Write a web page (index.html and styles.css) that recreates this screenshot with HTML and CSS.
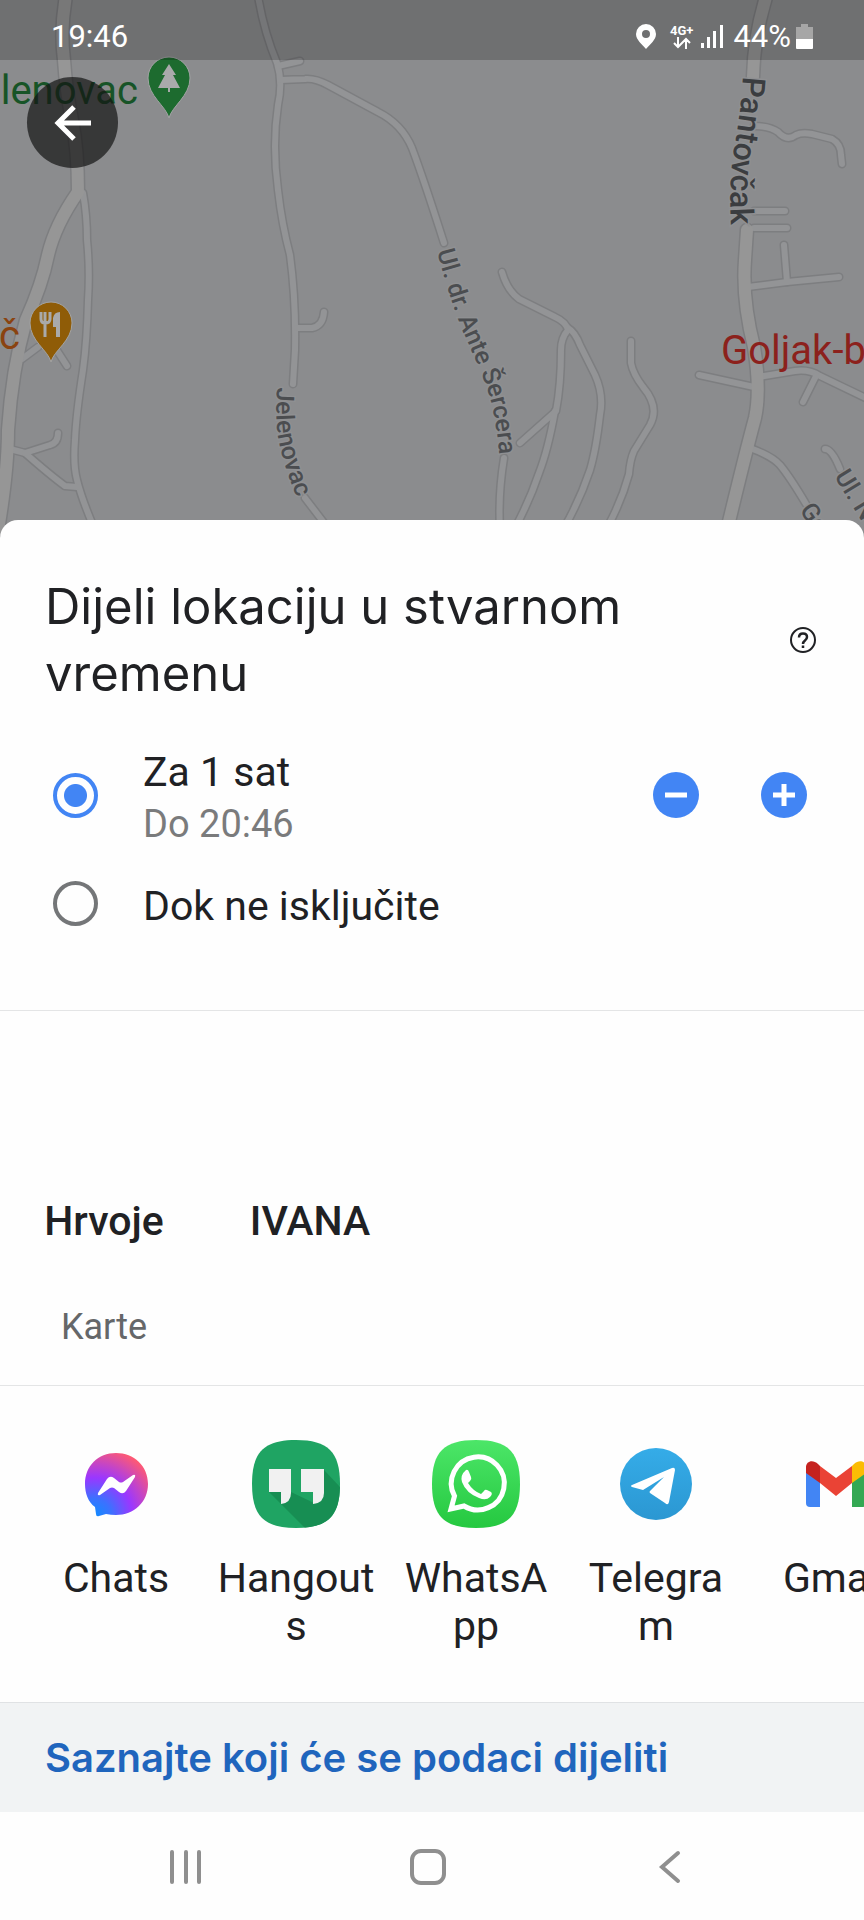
FILE: index.html
```
<!DOCTYPE html>
<html lang="hr">
  <head>
    <meta charset="UTF-8" />
    <meta name="viewport" content="width=device-width, initial-scale=1.0" />
    <title>Dijeli lokaciju u stvarnom vremenu</title>
    <link rel="stylesheet" href="styles.css">
  </head>
  <body>
    <header class="map">
      <svg class="map-canvas" viewBox="0 0 864 540" preserveAspectRatio="xMidYMin slice">
        <defs>
          <g id="streets">
            <path d="M83 193 Q87 215 87 240 Q90 270 88 300 Q87 340 83 370 Q76 415 75 440 Q73 465 77 480 Q82 500 95 530" />
            <path d="M10 449 L25 453 Q50 475 65 486 L77 487" />
            <path d="M25 453 L50 445 Q58 443 58 433" />
            <path d="M22 359 L38 347" />
            <path d="M56 349 L67 366" />
            <path d="M258 -4 Q264 32 277 63 Q283 82 278 105 Q272 145 278 190 Q282 225 290 255 Q296 300 295 350 L293 384" />
            <path d="M305 498 L328 528" />
            <path d="M278 66 L300 61" />
            <path d="M281 80 L305 79 Q315 78 328 85 L378 112 Q402 124 412 148 Q424 180 444 243" />
            <path d="M504 458 Q498 495 500 530" />
            <path d="M297 328 L312 328 Q323 326 324 312" />
            <path d="M502 272 Q507 290 519 299 Q535 307 555 317 Q566 322 568 330 Q561 338 561 350 Q561 385 556 411 L520 443" />
            <path d="M568 328 Q575 332 580 345 L595 375 Q604 395 600 415 Q596 450 590 470 Q580 500 564 528" />
            <path d="M555 411 Q548 450 539 473 Q530 500 515 528" />
            <path d="M631 341 L631 363 Q633 374 643 387 Q660 407 650 425 L634 451 Q630 460 629 474 Q622 500 608 526" />
            <path d="M754 126 Q770 126 778 132 Q787 142 796 135 Q802 132 812 134 L832 139 Q841 144 841 155 L842 164" />
            <path d="M754 211 L785 211" />
            <path d="M754 228 L787 228" />
            <path d="M784 245 L787 282" />
            <path d="M748 287 L787 282 L839 277" />
            <path d="M699 375 L754 387" />
            <path d="M758 377 L795 371 Q809 369 820 376 L872 401" />
            <path d="M816 376 L803 402" />
            <path d="M750 448 Q772 456 780 465 Q790 477 806 504" />
            <path d="M825 449 Q832 449 840 469" />
          </g>
          <g id="avenues">
            <path d="M66 -4 Q60 30 64 60 Q66 90 72 120 Q78 150 78 192 Q55 225 48 255 Q42 285 26 320 Q12 370 8 430 Q8 470 -2 530" />
            <path d="M767 -6 Q754 35 753 77" />
            <path d="M747 230 L745 260 Q742 300 754 347 Q761 390 755 418 Q745 455 727 530" />
          </g>
          <path id="path-jelenovac" d="M277 387 Q274 425 281 450 Q287 477 304 514" />
          <path id="path-sercera" d="M437 251 Q447 290 461 327 Q479 367 487 388 Q497 418 500 465" />
          <path id="path-pantovcak" d="M743 76 Q740 120 733 155 Q728 190 732 240" />
          <path id="path-go" d="M799 510 L840 570" />
          <path id="path-uln" d="M834 476 L885 560" />
        </defs>

        <use href="#streets" class="street-edge" />
        <use href="#avenues" class="avenue-edge" />
        <use href="#streets" class="street" />
        <use href="#avenues" class="avenue" />

        <text class="street-name"><textPath href="#path-jelenovac">Jelenovac</textPath></text>
        <text class="street-name"><textPath href="#path-sercera">Ul. dr. Ante Šercera</textPath></text>
        <text class="avenue-name"><textPath href="#path-pantovcak">Pantovčak</textPath></text>
        <text class="street-name"><textPath href="#path-go">Go</textPath></text>
        <text class="street-name"><textPath href="#path-uln">Ul. N</textPath></text>

        <text class="place park" x="138" y="104" text-anchor="end">lenovac</text>
        <text class="place food" x="20" y="349" text-anchor="end">č</text>
        <text class="place clinic" x="721" y="364">Goljak-b</text>

        <g class="pin">
          <path fill="#1d6b2f" d="M169 118 C166 106 148 96 148 78 A21 21 0 0 1 190 78 C190 96 172 106 169 118 Z" />
          <path fill="#a9aaab" stroke="none" d="M169 64 L176 75 H173 L180 88 H170 V92 H168 V88 H158 L165 75 H162 Z" />
        </g>
        <g class="pin">
          <path fill="#8f5c07" d="M51 362 C48 350 30 341 30 323 A21 21 0 0 1 72 323 C72 341 54 350 51 362 Z" />
          <path class="cutlery" d="M41 312 V319 Q41 323 45 323 Q50 323 50 319 V312 M45 312 V337" />
          <path fill="#a9aaab" stroke="none" d="M60 312 V337 H56 V327 H53 V318 Q54 312 60 312 Z" />
        </g>
      </svg>

      <div class="status-bar">
        <span class="clock">19:46</span>
        <div class="status-icons">
          <svg width="20" height="25" viewBox="0 0 20 25"><path fill="#fff" fill-rule="evenodd" d="M10 0 A10 10 0 0 1 20 10 C20 16 14 20 10 25 C6 20 0 16 0 10 A10 10 0 0 1 10 0 Z M10 6 A4 4 0 1 0 10 14 A4 4 0 1 0 10 6 Z" /></svg>
          <span class="network">
            4G+
            <svg width="18" height="12" viewBox="0 0 18 12" fill="none" stroke="#fff" stroke-width="2"><path d="M5 0 V10 M1 6 L5 10 L9 6 M13 12 V2 M9 6 L13 2 L17 6" /></svg>
          </span>
          <svg width="22" height="24" viewBox="0 0 22 24" fill="#fff"><path d="M0 18 h3 v5 h-3 z M6 12 h3 v11 h-3 z M12 6 h3 v17 h-3 z M19 0 h3 v23 h-3 z" /></svg>
          <span class="battery-level">44%</span>
          <svg width="17" height="25" viewBox="0 0 17 25"><path fill="#a6a6a6" d="M5 0 h7 v3 h5 v13 h-17 v-13 h5 z" /><path fill="#fff" d="M0 15 h17 v9 q0 1 -1 1 h-15 q-1 0 -1 -1 z" /></svg>
        </div>
      </div>

      <button class="back-button" aria-label="Natrag">
        <svg width="38" height="36" viewBox="0 0 38 36" fill="none" stroke="#fff" stroke-width="5"><path d="M37 18 H4 M20 2 L4 18 L20 34" /></svg>
      </button>
    </header>

    <main class="sheet">
      <section class="duration">
        <div class="title-row">
          <h1>Dijeli lokaciju u stvarnom vremenu</h1>
          <button class="help-button" aria-label="Pomoć">
            <svg width="26" height="26" viewBox="0 0 26 26" fill="none" stroke="#202124"><circle cx="13" cy="13" r="12" stroke-width="2" /><path stroke-width="2.500" d="M9 10.500 Q9 6.500 13 6.500 Q17 6.500 17 10 Q17 12 15 13.500 Q13 15 13 17 M13 18.500 V21" /></svg>
          </button>
        </div>

        <div class="option">
          <input type="radio" name="duration" id="one-hour" checked>
          <label for="one-hour">Za 1 sat <small>Do 20:46</small></label>
          <div class="stepper">
            <button aria-label="Manje"><svg width="46" height="46" viewBox="0 0 46 46"><circle cx="23" cy="23" r="23" fill="#4285f4" /><path d="M12 23 H34" stroke="#fff" stroke-width="5" /></svg></button>
            <button aria-label="Više"><svg width="46" height="46" viewBox="0 0 46 46"><circle cx="23" cy="23" r="23" fill="#4285f4" /><path d="M12 23 H34 M23 12 V34" stroke="#fff" stroke-width="5" /></svg></button>
          </div>
        </div>
        <div class="option">
          <input type="radio" name="duration" id="until-off">
          <label for="until-off">Dok ne isključite</label>
        </div>
      </section>

      <section class="people">
        <button class="person">Hrvoje <small>Karte</small></button>
        <button class="person">IVANA</button>
      </section>

      <section class="apps">
        <button class="app">
          <svg width="88" height="88" viewBox="0 0 88 88">
            <defs>
              <radialGradient id="messenger" gradientUnits="userSpaceOnUse" cx="22" cy="76" r="70">
                <stop offset="0" stop-color="#0f8dff" />
                <stop offset="0.250" stop-color="#3c71ff" />
                <stop offset="0.550" stop-color="#9a37ff" />
                <stop offset="0.750" stop-color="#c545c5" />
                <stop offset="1" stop-color="#ff5a72" />
              </radialGradient>
            </defs>
            <path fill="url(#messenger)" d="M44 13 C62 13 76 26 76 44 C76 62 62 75 44 75 Q39 75 34 74 L27 76 Q24 77 24 74 L23 67 C16 62 13 53 13 44 C13 26 26 13 44 13 Z" />
            <path fill="#fff" d="M26 53 L35 39 Q38 35 42 38 L47 42 Q49 43 51 42 L61 35 Q64 34 63 37 L54 51 Q51 55 47 52 L42 48 Q40 47 38 48 L28 55 Q25 56 26 53 Z" />
          </svg>
          <span>Chats</span>
        </button>
        <button class="app">
          <svg width="88" height="88" viewBox="0 0 88 88">
            <defs>
              <clipPath id="squircle"><path d="M44 0 C76 0 88 12 88 44 C88 76 76 88 44 88 C12 88 0 76 0 44 C0 12 12 0 44 0 Z" /></clipPath>
            </defs>
            <g clip-path="url(#squircle)">
              <path fill="#1fa463" d="M0 0 H88 V88 H0 Z" />
              <path fill="#178e53" d="M17 52 L53 88 H88 V47 L72 30 L64 64 L39 52 Z" />
            </g>
            <path fill="#f1f1f1" d="M17 29 H39 V53 Q39 63 29 64 V52 H17 Z M49 29 H72 V53 Q72 63 61 64 V52 H49 Z" />
          </svg>
          <span>Hangouts</span>
        </button>
        <button class="app">
          <svg width="88" height="88" viewBox="0 0 88 88">
            <defs>
              <linearGradient id="whatsapp" x2="0" y2="1"><stop stop-color="#4ce668" /><stop offset="1" stop-color="#25c840" /></linearGradient>
            </defs>
            <path fill="url(#whatsapp)" d="M44 0 C76 0 88 12 88 44 C88 76 76 88 44 88 C12 88 0 76 0 44 C0 12 12 0 44 0 Z" />
            <path fill="none" stroke="#fff" stroke-width="5" d="M19 69 L22.500 56 A26.500 26.500 0 1 1 32 66 Z" />
            <path fill="#fff" d="M34 30 Q36 29 37 32 L39 37 Q40 39 38 41 L36 43 Q41 51 49 54 L52 51 Q53 49 55 50 L59 52 Q61 54 58 57 Q54 61 47 58 Q34 53 30 42 Q28 35 34 30 Z" />
          </svg>
          <span>WhatsApp</span>
        </button>
        <button class="app">
          <svg width="88" height="88" viewBox="0 0 88 88">
            <defs>
              <linearGradient id="telegram" x2="0" y2="1"><stop stop-color="#35ace8" /><stop offset="1" stop-color="#2b97d2" /></linearGradient>
            </defs>
            <circle cx="44" cy="44" r="36" fill="url(#telegram)" />
            <path fill="#fff" d="M20 45 L60 28 Q63 27 63 30 L57 62 Q56 66 53 63 L38 53 Q37 52 38 51 L52 37 L31 50 L20 47 Q18 46 20 45 Z" />
          </svg>
          <span>Telegram</span>
        </button>
        <button class="app">
          <svg width="88" height="88" viewBox="0 0 88 88">
            <path fill="#4285f4" d="M14 32 L28 42 V67 H18 Q14 67 14 63 Z" />
            <path fill="#34a853" d="M74 32 L60 42 V67 H70 Q74 67 74 63 Z" />
            <path fill="#ea4335" d="M28 26 L44 38 L60 26 V43 L44 56 L28 43 Z" />
            <path fill="#c5221f" d="M14 27 C14 21 21 19 26 24 L28 26 V43 L14 33 Z" />
            <path fill="#fbbc04" d="M74 27 C74 21 67 19 62 24 L60 26 V43 L74 33 Z" />
          </svg>
          <span>Gmail</span>
        </button>
      </section>

      <a class="learn-more" href="#">Saznajte koji će se podaci dijeliti</a>
    </main>

    <nav class="nav-bar">
      <button aria-label="Nedavno"><svg width="36" height="36" viewBox="0 0 36 36"><path d="M4 3 V33 M18 3 V33 M31 3 V33" /></svg></button>
      <button aria-label="Početna"><svg width="36" height="36" viewBox="0 0 36 36"><rect x="2" y="2" width="32" height="32" rx="9" /></svg></button>
      <button aria-label="Natrag"><svg width="36" height="36" viewBox="0 0 36 36"><path d="M26 4 L10 18 L26 32" /></svg></button>
    </nav>
  </body>
</html>
```

FILE: styles.css
```
* {
    box-sizing: border-box;
}

body {
    margin: 0;
    background-color: #fefefe;
    color: #202124;
    font-family: Roboto, "Liberation Sans", sans-serif;
    font-size: 41px;
}

button {
    margin: 0;
    padding: 0;
    border: 0;
    background: none;
    color: inherit;
    font: inherit;
}

svg {
    display: block;
}

/* Map */
.map {
    position: relative;
    height: 540px;
    background-color: #8b8c8e;
    overflow: hidden;
}

.map-canvas {
    position: absolute;
    top: 0;
    left: 0;
    width: 100%;
    height: 100%;
}

.street-edge, .street, .avenue-edge, .avenue {
    fill: none;
    stroke-linecap: round;
    stroke-linejoin: round;
}

.street-edge, .avenue-edge { stroke: #7d7e80; }
.street, .avenue { stroke: #939496; }
.avenue { stroke: #969696; }
.street-edge { stroke-width: 9; }
.street { stroke-width: 6; }
.avenue-edge { stroke-width: 15; }
.avenue { stroke-width: 12; }

.street-name, .avenue-name {
    fill: #4b4d50;
    stroke: #8f9092;
    stroke-width: 3px;
    paint-order: stroke;
    font-size: 25px;
    font-weight: 500;
}

.avenue-name {
    fill: #3b3d40;
    font-size: 32px;
}

.place { font-size: 40px; }
.park { fill: #175427; }
.food { fill: #8a4310; }
.clinic { fill: #8c211c; }

.pin {
    stroke: #a3a4a5;
    stroke-width: 1;
}

.pin .cutlery {
    fill: none;
    stroke: #a9aaab;
    stroke-width: 3;
}

.status-bar {
    position: relative;
    display: flex;
    align-items: center;
    justify-content: space-between;
    height: 60px;
    padding: 13px 51px 0;
    background-color: rgba(0, 0, 0, 0.2);
    color: #fff;
    font-size: 31px;
}

.status-icons {
    display: flex;
    align-items: center;
}

.network {
    display: flex;
    flex-direction: column;
    align-items: center;
    margin: 0 8px 0 14px;
    font-size: 13px;
    font-weight: 700;
    line-height: 13px;
}

.battery-level {
    margin: 0 5px 0 10px;
}

.back-button {
    position: relative;
    display: flex;
    align-items: center;
    justify-content: center;
    width: 91px;
    height: 91px;
    margin: 17px 27px;
    border-radius: 50%;
    background-color: rgba(20, 20, 20, 0.7);
}

/* Bottom sheet */
.sheet {
    position: relative;
    margin-top: -20px;
    border-radius: 18px 18px 0 0;
    background-color: #fefefe;
}

h1, .learn-more {
    font-family: Inter, Roboto, sans-serif;
}

.duration {
    padding: 53px 45px 53px;
    border-bottom: 1px solid #e4e5e6;
}

.title-row {
    display: flex;
    align-items: center;
    justify-content: space-between;
    margin-bottom: 34px;
}

h1 {
    max-width: 620px;
    margin: 0;
    font-size: 49px;
    font-weight: 400;
    line-height: 67px;
}

.help-button {
    margin-right: 3px;
}

.option {
    display: flex;
    align-items: center;
    height: 108px;
}

.option input {
    appearance: none;
    width: 45px;
    height: 45px;
    margin: 0 45px 0 8px;
    border: 4px solid #747678;
    border-radius: 50%;
}

.option input:checked {
    border-color: #4285f4;
    background: radial-gradient(circle, #4285f4 11px, transparent 12px);
}

.option label {
    flex: 1;
    padding-top: 6px;
    line-height: 52px;
}

.option small {
    display: block;
    color: #7a7b7c;
    font-size: 38px;
}

.stepper {
    display: flex;
    gap: 62px;
    margin-right: 12px;
}

.people {
    display: flex;
    align-items: flex-start;
    height: 375px;
    padding: 183px 2px 0 1px;
    border-bottom: 1px solid #e4e5e6;
}

.person {
    width: 206px;
    font-weight: 500;
    line-height: 54px;
}

.person small {
    display: block;
    margin-top: 52px;
    color: #656769;
    font-size: 36px;
    font-weight: 400;
}

.apps {
    display: flex;
    align-items: flex-start;
    height: 317px;
    padding: 54px 0 0 26px;
    border-bottom: 1px solid #e0e2e4;
    overflow: hidden;
}

.app {
    flex: none;
    width: 180px;
    padding: 0 11px;
    line-height: 48px;
    word-break: break-all;
}

.app svg {
    margin: 0 auto 26px;
}

.learn-more {
    display: block;
    padding: 29px 45px 28px;
    background-color: #f1f3f4;
    color: #1f65bd;
    font-size: 40px;
    font-weight: 600;
    line-height: 52px;
    text-decoration: none;
}

.nav-bar {
    display: grid;
    grid-template-columns: repeat(3, 1fr);
    justify-items: center;
    padding: 37px 73px 37px 65px;
}

.nav-bar svg {
    fill: none;
    stroke: #8f8f8f;
    stroke-width: 4;
    stroke-linecap: round;
}
```
